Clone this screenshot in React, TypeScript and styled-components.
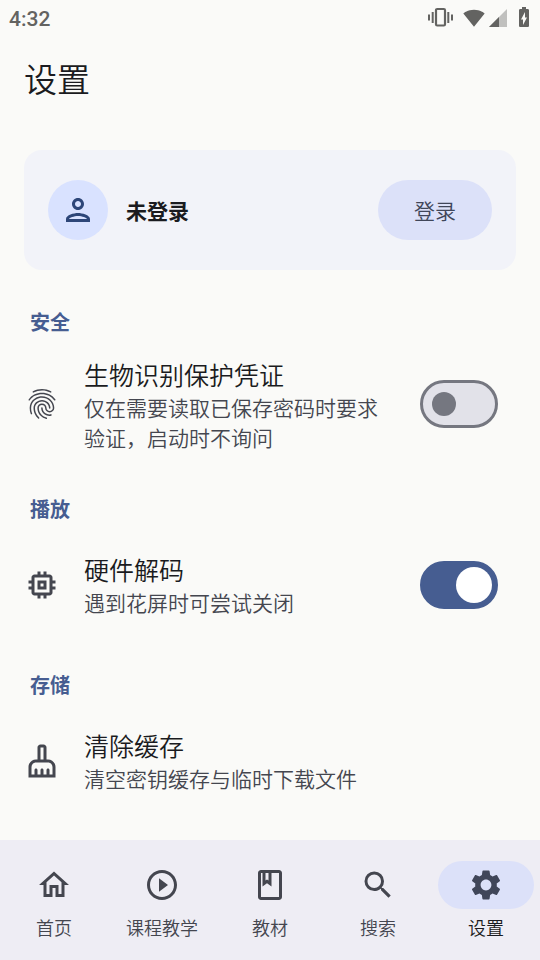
import React, { useState } from "react";
import styled, { createGlobalStyle } from "styled-components";
import type { IconType } from "react-icons";
import {
  MdSignalWifi4Bar,
  MdBatteryChargingFull,
  MdOutlinePerson,
  MdFingerprint,
  MdOutlineMemory,
  MdOutlineCleaningServices,
  MdOutlineHome,
  MdPlayCircleOutline,
  MdOutlineClass,
  MdSearch,
  MdSettings,
} from "react-icons/md";

const GlobalStyle = createGlobalStyle`
  *, *::before, *::after { box-sizing: border-box; }
  body {
    margin: 0;
    background: #fafaf8;
    color: #1a1b20;
    font-family: Roboto, "Noto Sans CJK SC", sans-serif;
    font-weight: 350;
  }
  button, input { font: inherit; }
`;

const Screen = styled.div`
  display: flex;
  flex-direction: column;
  min-height: 100vh;
`;

const StatusBar = styled.header`
  display: flex;
  align-items: center;
  justify-content: space-between;
  height: 36px;
  padding: 0 4px 0 9px;
  color: #636361;
`;

const Clock = styled.time`
  padding-top: 2px;
  font-size: 21px;
  line-height: 36px;
  font-weight: 500;
`;

const StatusIcons = styled.div`
  display: flex;
  align-items: center;
`;

const WifiSlot = styled.span`
  display: flex;
  margin: 0 4px 0 9px;
`;

const BatterySlot = styled.span`
  display: flex;
  margin: 0 0 2px 5px;
`;

const Main = styled.main`
  flex: 1;
  display: flex;
  flex-direction: column;
  padding: 0 24px 24px;
`;

const PageTitle = styled.h1`
  margin: 15px 0 39px;
  font-size: 33px;
  line-height: 60px;
  font-weight: 350;
`;

const AccountCard = styled.section`
  display: flex;
  align-items: center;
  gap: 18px;
  padding: 30px 24px;
  margin-bottom: 6px;
  border-radius: 18px;
  background: #f2f3f9;
`;

const Avatar = styled.div`
  display: flex;
  align-items: center;
  justify-content: center;
  width: 60px;
  height: 60px;
  border-radius: 50%;
  background: #d9e2ff;
  color: #2d4678;
`;

const AccountName = styled.span`
  flex: 1;
  padding-top: 4px;
  font-size: 21px;
  line-height: 30px;
  font-weight: 700;
`;

const LoginButton = styled.button`
  height: 60px;
  padding: 0 36px;
  border: 0;
  border-radius: 30px;
  background: #dce1f9;
  color: #404659;
  font-size: 21px;
`;

const Section = styled.section`
  margin-top: 32px;
`;

const SectionTitle = styled.h2`
  margin: 0 6px 6px;
  font-size: 20px;
  line-height: 30px;
  font-weight: 700;
  color: #465d91;
`;

const Row = styled.div`
  display: flex;
  align-items: center;
  width: 100%;
  min-height: 108px;
  padding: 9px 18px 9px 0;
`;

const RowButton = styled(Row).attrs({ as: "button", type: "button" })`
  border: 0;
  background: none;
  color: inherit;
  text-align: left;
`;

const RowIcon = styled.span`
  display: flex;
  flex: none;
  margin-right: 24px;
  color: #44464f;
`;

const RowText = styled.span<{ $threeLine?: boolean }>`
  flex: 1;
  display: flex;
  flex-direction: column;
  padding-top: ${({ $threeLine }) => ($threeLine ? 7 : 3)}px;
  margin-right: 24px;
`;

const RowTitle = styled.label`
  font-size: 25px;
  line-height: 34px;
`;

const RowDetail = styled.span`
  font-size: 21px;
  line-height: 30px;
  color: #44464f;
`;

const Switch = styled.input`
  appearance: none;
  flex: none;
  display: flex;
  align-items: center;
  width: 78px;
  height: 48px;
  margin: 0;
  padding: 0 9px;
  border: 3px solid #757780;
  border-radius: 24px;
  background: #e2e2e9;

  &::before {
    content: "";
    width: 24px;
    height: 24px;
    border-radius: 50%;
    background: #757780;
  }

  &:checked {
    justify-content: flex-end;
    padding: 0 3px;
    border-color: #465d91;
    background: #465d91;
  }

  &:checked::before {
    width: 36px;
    height: 36px;
    background: #ffffff;
  }
`;

const NavBar = styled.nav`
  position: sticky;
  bottom: 0;
  display: flex;
  height: 120px;
  background: #eeedf4;
`;

const NavItem = styled.a<{ $active: boolean }>`
  flex: 1;
  display: flex;
  flex-direction: column;
  align-items: center;
  padding-top: 21px;
  color: ${({ $active }) => ($active ? "#1a1b20" : "#44464f")};
  font-size: 18px;
  line-height: 24px;
  text-decoration: none;
`;

const NavPill = styled.span<{ $active: boolean }>`
  display: flex;
  align-items: center;
  justify-content: center;
  width: 96px;
  height: 48px;
  margin-bottom: 8px;
  border-radius: 24px;
  background: ${({ $active }) => ($active ? "#dce1f9" : "transparent")};
  color: ${({ $active }) => ($active ? "#404659" : "#44464f")};
`;

function VibrateIcon() {
  return (
    <svg width="26" height="22" viewBox="0 0 26 22" fill="currentColor" aria-hidden="true">
      <path d="M0 7.5h2v6H0zM3.7 5h2v11h-2zM19.3 5h2v11h-2zM23 7.5h2v6h-2z" />
      <rect x="8" y="2" width="9" height="16.5" rx="1.2" fill="none" stroke="currentColor" strokeWidth="2.2" />
    </svg>
  );
}

function SignalIcon() {
  return (
    <svg width="18" height="18" viewBox="0 0 18 18" aria-hidden="true">
      <path d="M18 0v18H0z" fill="#c0c0be" />
      <path d="M10 8v10H0z" fill="currentColor" />
    </svg>
  );
}

type ToggleRowProps = {
  id: string;
  icon: IconType;
  title: string;
  detail: string;
  initial: boolean;
  threeLine?: boolean;
};

function ToggleRow({ id, icon: Icon, title, detail, initial, threeLine }: ToggleRowProps) {
  const [on, setOn] = useState(initial);
  return (
    <Row>
      <RowIcon>
        <Icon size={36} />
      </RowIcon>
      <RowText $threeLine={threeLine}>
        <RowTitle htmlFor={id}>{title}</RowTitle>
        <RowDetail id={`${id}-detail`}>{detail}</RowDetail>
      </RowText>
      <Switch
        id={id}
        type="checkbox"
        role="switch"
        aria-describedby={`${id}-detail`}
        checked={on}
        onChange={(e) => setOn(e.target.checked)}
      />
    </Row>
  );
}

const tabs: { label: string; href: string; icon: IconType }[] = [
  { label: "首页", href: "#home", icon: MdOutlineHome },
  { label: "课程教学", href: "#courses", icon: MdPlayCircleOutline },
  { label: "教材", href: "#books", icon: MdOutlineClass },
  { label: "搜索", href: "#search", icon: MdSearch },
  { label: "设置", href: "#settings", icon: MdSettings },
];

export default function App() {
  return (
    <>
      <GlobalStyle />
      <Screen>
        <StatusBar>
          <Clock>4:32</Clock>
          <StatusIcons>
            <VibrateIcon />
            <WifiSlot>
              <MdSignalWifi4Bar size={22} />
            </WifiSlot>
            <SignalIcon />
            <BatterySlot>
              <MdBatteryChargingFull size={24} />
            </BatterySlot>
          </StatusIcons>
        </StatusBar>

        <Main>
          <PageTitle>设置</PageTitle>

          <AccountCard>
            <Avatar>
              <MdOutlinePerson size={36} />
            </Avatar>
            <AccountName>未登录</AccountName>
            <LoginButton type="button">登录</LoginButton>
          </AccountCard>

          <Section>
            <SectionTitle>安全</SectionTitle>
            <ToggleRow
              id="biometric"
              icon={MdFingerprint}
              title="生物识别保护凭证"
              detail="仅在需要读取已保存密码时要求验证，启动时不询问"
              initial={false}
              threeLine
            />
          </Section>

          <Section>
            <SectionTitle>播放</SectionTitle>
            <ToggleRow
              id="hardware-decoding"
              icon={MdOutlineMemory}
              title="硬件解码"
              detail="遇到花屏时可尝试关闭"
              initial
            />
          </Section>

          <Section>
            <SectionTitle>存储</SectionTitle>
            <RowButton>
              <RowIcon>
                <MdOutlineCleaningServices size={36} />
              </RowIcon>
              <RowText>
                <RowTitle as="span">清除缓存</RowTitle>
                <RowDetail>清空密钥缓存与临时下载文件</RowDetail>
              </RowText>
            </RowButton>
          </Section>
        </Main>

        <NavBar>
          {tabs.map(({ label, href, icon: Icon }) => {
            const active = href === "#settings";
            return (
              <NavItem
                key={href}
                href={href}
                $active={active}
                aria-current={active ? "page" : undefined}
              >
                <NavPill $active={active}>
                  <Icon size={36} />
                </NavPill>
                {label}
              </NavItem>
            );
          })}
        </NavBar>
      </Screen>
    </>
  );
}
